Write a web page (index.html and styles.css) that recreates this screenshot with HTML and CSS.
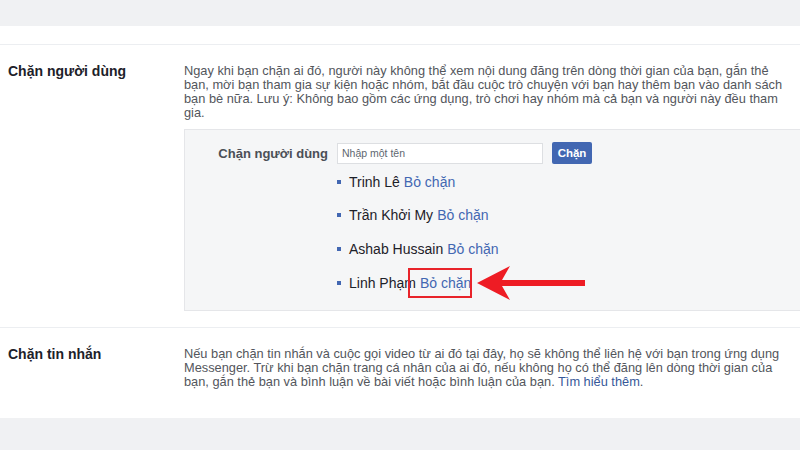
FILE: index.html
```html
<!DOCTYPE html>
<html lang="vi">
<head>
<meta charset="utf-8">
<link rel="stylesheet" href="styles.css">
</head>
<body>
<div class="topband"></div>
<div class="gap"></div>
<section class="section first">
  <div class="label">Chặn người dùng</div>
  <div class="content">
    <p class="desc">Ngay khi bạn chặn ai đó, người này không thể xem nội dung đăng trên dòng thời gian của bạn, gắn thẻ<br>bạn, mời bạn tham gia sự kiện hoặc nhóm, bắt đầu cuộc trò chuyện với bạn hay thêm bạn vào danh sách<br>bạn bè nữa. Lưu ý: Không bao gồm các ứng dụng, trò chơi hay nhóm mà cả bạn và người này đều tham<br>gia.</p>
    <div class="panel">
      <div class="form-row">
        <span class="form-label">Chặn người dùng</span>
        <span class="input">Nhập một tên</span>
        <span class="btn">Chặn</span>
      </div>
      <ul class="list">
        <li><span class="name">Trinh Lê</span> <span class="link">Bỏ chặn</span></li>
        <li><span class="name">Trần Khởi My</span> <span class="link">Bỏ chặn</span></li>
        <li><span class="name">Ashab Hussain</span> <span class="link">Bỏ chặn</span></li>
        <li class="marked"><span class="name">Linh Phạm</span> <span class="link">Bỏ chặn</span><span class="redbox"></span>
          <svg class="arrow" width="112" height="40" viewBox="0 0 112 40"><polygon points="0,18 33,1 25,15 108,15 108,21 25,21 33,35" fill="#ee1c24"/></svg>
        </li>
      </ul>
    </div>
  </div>
</section>
<section class="section second">
  <div class="label">Chặn tin nhắn</div>
  <div class="content">
    <p class="desc">Nếu bạn chặn tin nhắn và cuộc gọi video từ ai đó tại đây, họ sẽ không thể liên hệ với bạn trong ứng dụng<br>Messenger. Trừ khi bạn chặn trang cá nhân của ai đó, nếu không họ có thể đăng lên dòng thời gian của<br>bạn, gắn thẻ bạn và bình luận về bài viết hoặc bình luận của bạn. <span class="more">Tìm hiểu thêm</span>.</p>
  </div>
</section>
<div class="bottomband"></div>
</body>
</html>
```

FILE: styles.css
```css
* { box-sizing: border-box; }
html, body { margin: 0; padding: 0; }
body {
  width: 800px;
  height: 450px;
  overflow: hidden;
  background: #ffffff;
  font-family: "Liberation Sans", Arial, sans-serif;
  color: #1d2129;
}
.topband { height: 26px; background: #f0f1f3; }
.gap { height: 18px; }
.section {
  display: flex;
  border-top: 1px solid #eceef1;
}
.section.first { padding-top: 19px; padding-bottom: 16px; }
.section.second { padding-top: 19px; height: 91px; }
.label {
  width: 184px;
  padding-left: 8px;
  font-weight: bold;
  font-size: 14px;
  line-height: 14px;
  color: #1d2129;
  flex-shrink: 0;
}
.content { flex: 1; min-width: 0; }
.desc {
  margin: 0;
  white-space: nowrap;
  font-size: 12.8px;
  line-height: 14px;
  color: #53565c;
}
.more { color: #365899; }
.panel {
  margin-top: 9px;
  background: #f5f6f7;
  border: 1px solid #e5e6e9;
  border-right: none;
  padding: 12px 0 14px 0;
  height: 182px;
}
.form-row {
  display: flex;
  align-items: center;
  height: 22px;
}
.form-label {
  width: 143px;
  text-align: right;
  font-weight: bold;
  font-size: 13px;
  color: #4b4f56;
  margin-right: 9px;
}
.input {
  width: 206px;
  height: 21px;
  background: #fff;
  border: 1px solid #dddfe2;
  font-size: 10.5px;
  color: #606770;
  padding: 3px 4px;
  line-height: 13px;
}
.btn {
  margin-left: 9px;
  width: 40px;
  height: 22px;
  background: #4267b2;
  border-radius: 2px;
  color: #fff;
  font-weight: bold;
  font-size: 11.5px;
  display: flex;
  align-items: center;
  justify-content: center;
}
.list {
  list-style: none;
  margin: 0;
  padding: 1px 0 0 151px;
}
.list li {
  position: relative;
  display: flex;
  align-items: center;
  height: 33.5px;
  font-size: 14px;
  color: #1d2129;
}
.list li::before {
  content: "";
  width: 4px;
  height: 4px;
  background: #4267b2;
  margin-right: 8px;
  margin-left: 1px;
}
.name { margin-right: 4px; }
.link { color: #4267b2; }
.list li.marked { height: 35px; }
.redbox {
  position: absolute;
  left: 72px;
  top: 2px;
  width: 64px;
  height: 30px;
  border: 2px solid #e8232a;
}
.arrow {
  position: absolute;
  left: 141px;
  top: -1px;
}
.bottomband {
  height: 40px;
  background: #f0f1f3;
}
```
